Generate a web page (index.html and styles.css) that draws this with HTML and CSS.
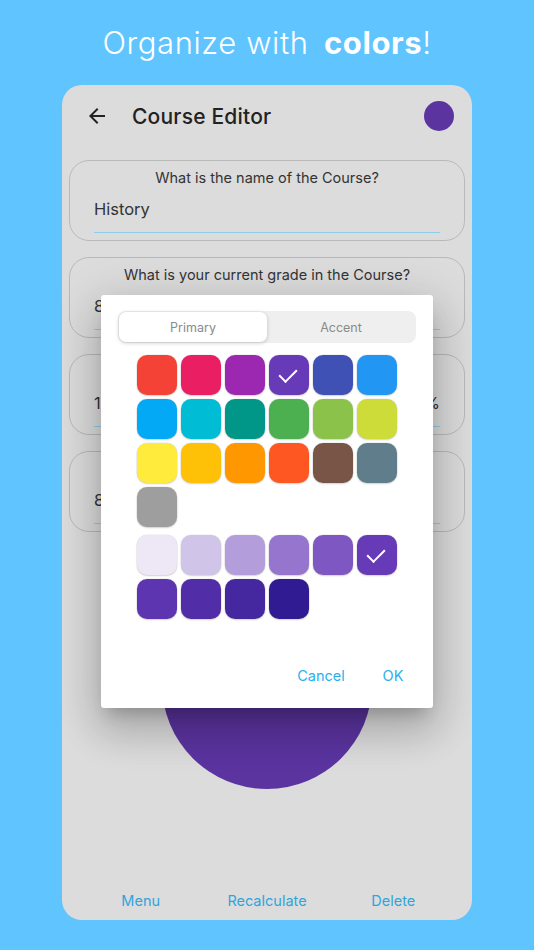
FILE: index.html
```html
<!DOCTYPE html>
<html>
  <head>
    <title>Course Editor</title>
    <link rel="stylesheet" href="styles.css">
  </head>
  <body>
    <h1 class="headline">Organize with <b>colors</b>!</h1>
    <div class="phone">
      <div class="appbar">
        <svg class="back" width="24" height="24" viewBox="0 0 24 24"><path d="M20 11H7.83l5.59-5.59L12 4l-8 8 8 8 1.41-1.41L7.83 13H20v-2z" fill="#222"/></svg>
        <span class="title">Course Editor</span>
        <span class="avatar"></span>
      </div>
      <div class="card">
        <div class="label">What is the name of the Course?</div>
        <div class="value">History</div>
        <div class="line"></div>
      </div>
      <div class="card">
        <div class="label">What is your current grade in the Course?</div>
        <div class="value">87</div>
        <div class="line"></div>
      </div>
      <div class="card">
        <div class="label">What percentage of your grade is left?</div>
        <div class="value split"><span>15</span><span>%</span></div>
        <div class="line"></div>
      </div>
      <div class="card">
        <div class="label">What grade do you want in the Course?</div>
        <div class="value">85</div>
        <div class="line"></div>
      </div>
      <div class="bigdot"></div>
      <div class="bottombar">
        <span class="tbtn">Menu</span>
        <span class="tbtn">Recalculate</span>
        <span class="tbtn">Delete</span>
      </div>

      <div class="dialog">
        <div class="segments">
          <span class="seg on">Primary</span>
          <span class="seg">Accent</span>
        </div>
        <div class="swatches">
          <span class="sw" style="background:#f44336"></span>
          <span class="sw" style="background:#e91e63"></span>
          <span class="sw" style="background:#9c27b0"></span>
          <span class="sw checked" style="background:#673ab7"></span>
          <span class="sw" style="background:#3f51b5"></span>
          <span class="sw" style="background:#2196f3"></span>
          <span class="sw" style="background:#03a9f4"></span>
          <span class="sw" style="background:#00bcd4"></span>
          <span class="sw" style="background:#009688"></span>
          <span class="sw" style="background:#4caf50"></span>
          <span class="sw" style="background:#8bc34a"></span>
          <span class="sw" style="background:#cddc39"></span>
          <span class="sw" style="background:#ffeb3b"></span>
          <span class="sw" style="background:#ffc107"></span>
          <span class="sw" style="background:#ff9800"></span>
          <span class="sw" style="background:#ff5722"></span>
          <span class="sw" style="background:#795548"></span>
          <span class="sw" style="background:#607d8b"></span>
          <span class="sw" style="background:#9e9e9e"></span>
        </div>
        <div class="swatches shades">
          <span class="sw" style="background:#ede7f6"></span>
          <span class="sw" style="background:#d1c4e9"></span>
          <span class="sw" style="background:#b39ddb"></span>
          <span class="sw" style="background:#9575cd"></span>
          <span class="sw" style="background:#7e57c2"></span>
          <span class="sw checked" style="background:#673ab7"></span>
          <span class="sw" style="background:#5e35b1"></span>
          <span class="sw" style="background:#512da8"></span>
          <span class="sw" style="background:#4527a0"></span>
          <span class="sw" style="background:#311b92"></span>
        </div>
        <div class="actions">
          <span class="dbtn">Cancel</span>
          <span class="dbtn">OK</span>
        </div>
      </div>
    </div>
  </body>
</html>
```

FILE: styles.css
```css
body {
  margin:0;
  background:#60c4ff;
  font-family:Inter, "Liberation Sans", sans-serif;
  height:950px;
  overflow:hidden;
}
.headline {
  margin:0;
  height:85px;
  line-height:86px;
  text-align:center;
  color:#fff;
  font-size:31px;
  font-weight:300;
  letter-spacing:0.6px;
}
.headline b {
  font-weight:700;
  margin-left:6px;
}
.phone {
  position:relative;
  margin-left:62px;
  width:410px;
  height:835px;
  background:#dcdcdc;
  border-radius:20px;
  overflow:hidden;
  display:flex;
  flex-direction:column;
}
.appbar {
  height:62px;
  display:flex;
  align-items:center;
  padding:0 18px 0 23px;
  flex-shrink:0;
}
.back {
  margin-right:24px;
}
.title {
  flex:1;
  margin-left:-1px;
  font-size:21px;
  font-weight:500;
  letter-spacing:0.2px;
  color:#222;
}
.avatar {
  width:30px;
  height:30px;
  border-radius:50%;
  background:#5b34a0;
}
.card {
  margin:13px 7px 3px;
  height:79px;
  border:1px solid #b9b9b9;
  border-radius:20px;
  flex-shrink:0;
  display:flex;
  flex-direction:column;
  padding:0 24px;
}
.card + .card {
  margin-top:13px;
}
.label {
  text-align:center;
  font-size:14.5px;
  color:#333;
  margin-top:7px;
  line-height:20px;
}
.value {
  font-size:16.5px;
  color:#333;
  margin-top:10px;
  line-height:22px;
}
.split {
  display:flex;
  justify-content:space-between;
}
.line {
  margin-top:auto;
  margin-bottom:7px;
  height:1px;
  background:#90cdea;
}
.bigdot {
  width:210px;
  height:210px;
  border-radius:50%;
  background:#5b34a0;
  margin:44px auto 0;
  flex-shrink:0;
}
.bottombar {
  margin-top:auto;
  height:40px;
  display:flex;
  justify-content:space-evenly;
  align-items:center;
}
.tbtn {
  min-width:64px;
  padding:0 8px;
  box-sizing:border-box;
  text-align:center;
  color:#2ea5dc;
  font-size:14.5px;
}
.dialog {
  position:absolute;
  left:39px;
  top:210px;
  width:332px;
  height:413px;
  background:#fff;
  border-radius:3px;
  box-shadow:0 24px 38px 3px rgba(0,0,0,0.14), 0 9px 46px 8px rgba(0,0,0,0.12), 0 11px 15px -7px rgba(0,0,0,0.2);
  display:flex;
  flex-direction:column;
}
.segments {
  margin:16px 17px 0;
  height:32px;
  background:#efefef;
  border-radius:8px;
  display:flex;
  padding:1px;
  box-sizing:border-box;
}
.seg {
  flex:1;
  display:flex;
  align-items:center;
  justify-content:center;
  font-size:12.5px;
  color:#8a8a8a;
  border-radius:7px;
}
.seg.on {
  background:#fff;
  box-shadow:0 1px 4px rgba(0,0,0,0.2);
}
.swatches {
  margin:12px auto 0;
  width:260px;
  display:grid;
  grid-template-columns:repeat(6, 40px);
  gap:4px;
}
.shades {
  margin-top:8px;
}
.sw {
  width:40px;
  height:40px;
  border-radius:10px;
  box-shadow:0 0 0 0.5px rgba(0,0,0,0.08), 0 1px 2px rgba(0,0,0,0.15);
  position:relative;
}
.checked::after {
  content:"";
  position:absolute;
  left:14px;
  top:10px;
  width:8px;
  height:15px;
  border:solid #fff;
  border-width:0 2px 2px 0;
  transform:rotate(45deg);
}
.actions {
  margin-top:auto;
  padding:8px 8px 14px;
  display:flex;
  justify-content:flex-end;
  gap:8px;
}
.dbtn {
  min-width:64px;
  height:36px;
  line-height:36px;
  text-align:center;
  color:#29b1ee;
  font-size:14.5px;
  padding:0 8px;
  box-sizing:border-box;
}
```
